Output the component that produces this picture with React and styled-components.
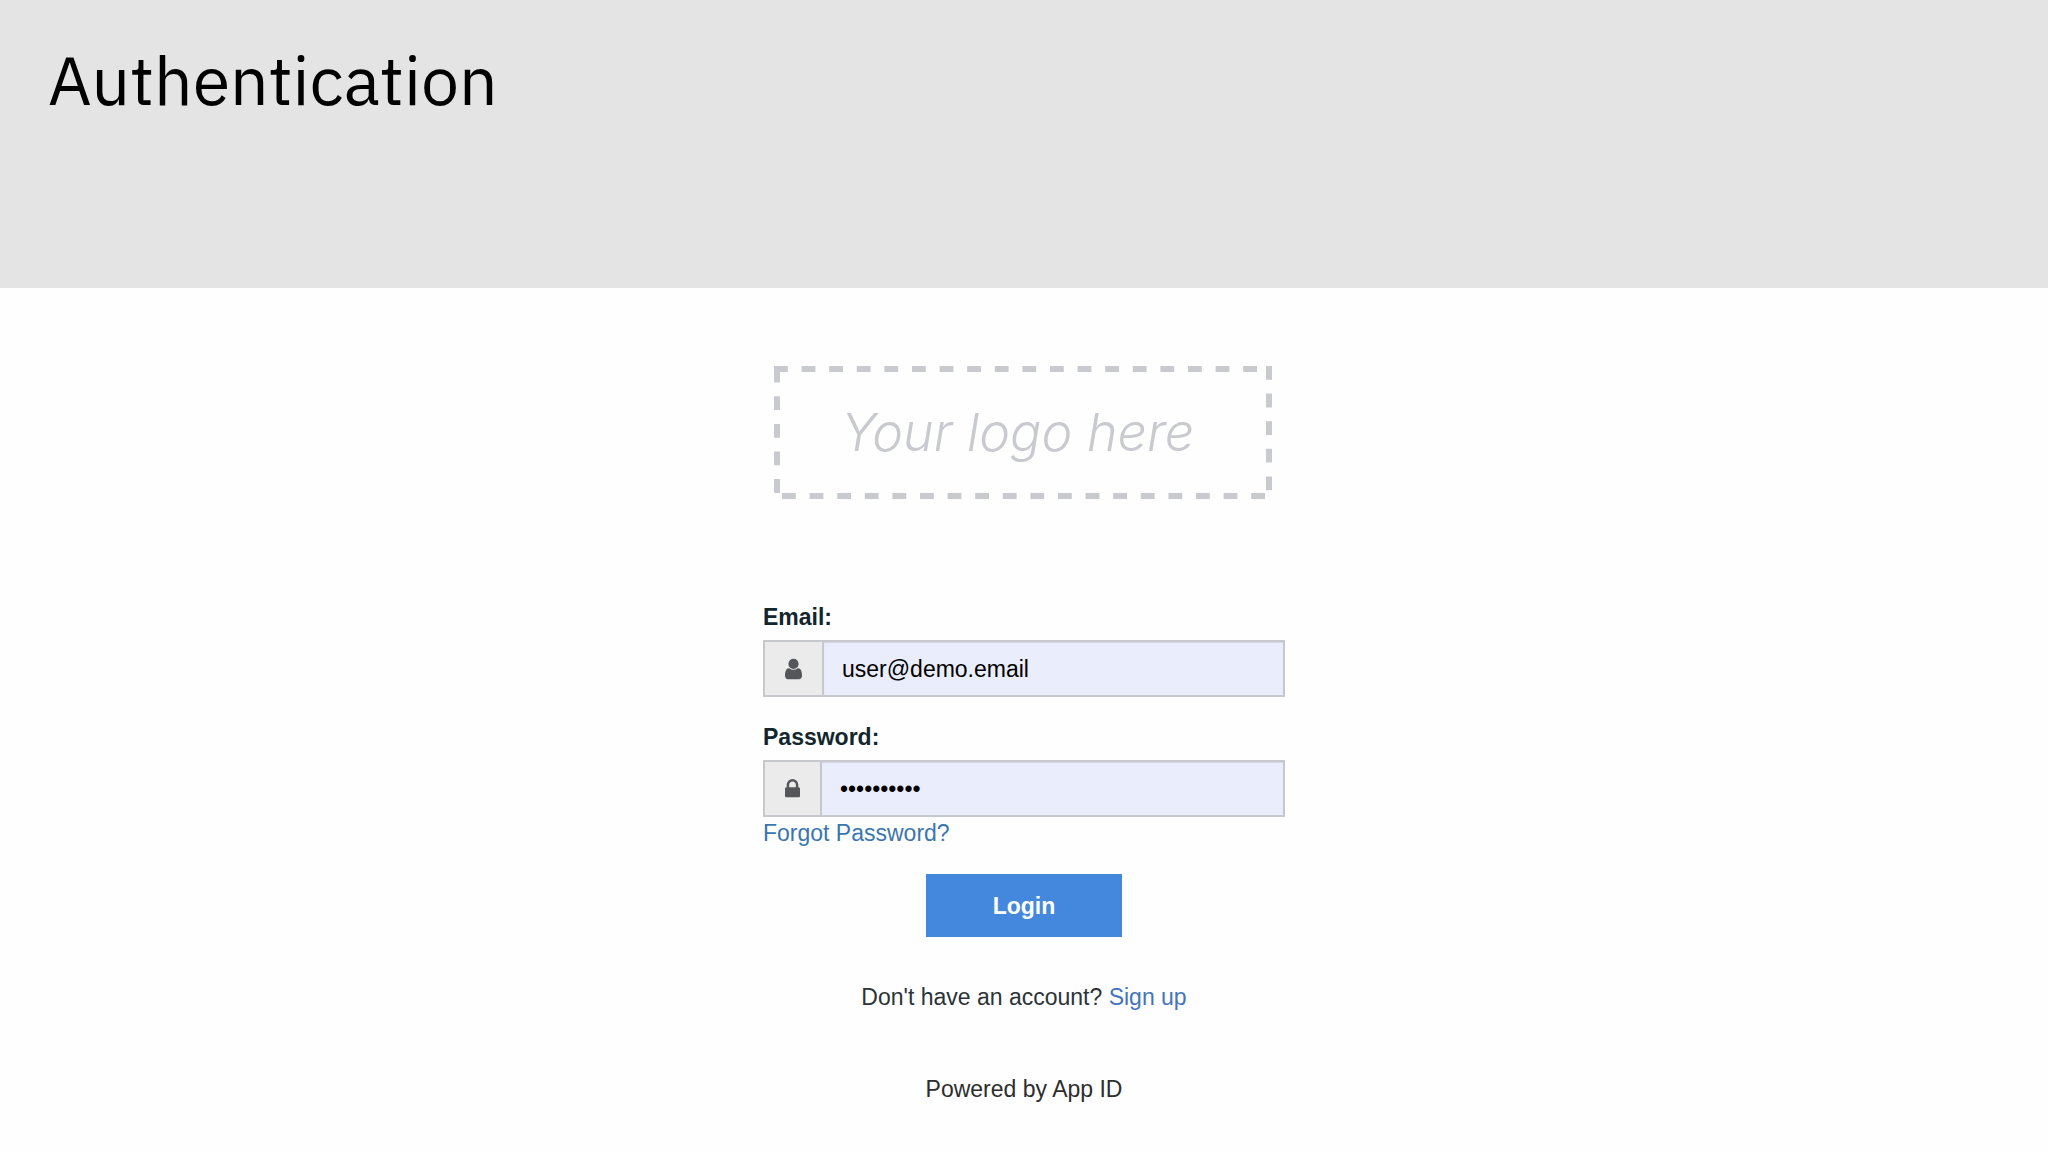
import React from 'react'
import styled, { createGlobalStyle } from 'styled-components'

const userPathD =
  'M1536 1399q0 109-62.5 187t-150.5 78h-854q-88 0-150.5-78t-62.5-187q0-85 8.5-160.5t31.5-152 58.5-131 94-89 134.5-34.5q131 128 313 128t313-128q76 0 134.5 34.5t94 89 58.5 131 31.5 152 8.5 160.5zm-256-887q0 159-112.5 271.5t-271.5 112.5-271.5-112.5-112.5-271.5 112.5-271.5 271.5-112.5 271.5 112.5 112.5 271.5z'
const lockPathD =
  'M640 768h512v-192q0-106-75-181t-181-75-181 75-75 181v192zm832 96v576q0 40-28 68t-68 28h-960q-40 0-68-28t-28-68v-576q0-40 28-68t68-28h32v-192q0-184 132-316t316-132 316 132 132 316v192h32q40 0 68 28t28 68z'

const GlobalStyle = createGlobalStyle`
  * {
    box-sizing: border-box;
  }
  body {
    margin: 0;
    background: #fefefe;
    color: #12262e;
    font-family: 'Liberation Sans', Arial, sans-serif;
    font-size: 23px;
    line-height: 32px;
  }
`

const Header = styled.header`
  background: #e4e4e4;
  min-height: 288px;
  padding: 35px 48px;
  h1 {
    margin: 0;
    color: #000;
    font-family: 'IBM Plex Sans', Roboto, sans-serif;
    font-size: 68px;
    font-weight: 400;
    line-height: 90px;
  }
`

const Main = styled.main`
  display: flex;
  flex-direction: column;
  align-items: center;
  padding: 78px 24px 40px;
`

const Logo = styled.div`
  display: grid;
  width: 100%;
  max-width: 500px;
  padding-right: 2px;
  color: #c8cacf;
  > * {
    grid-area: 1 / 1;
  }
  svg {
    display: block;
    width: 100%;
    fill: none;
    stroke: currentColor;
    stroke-width: 6;
    stroke-dasharray: 13.8 13.8;
  }
  span {
    place-self: center;
    padding-right: 10px;
    font-family: Inter, sans-serif;
    font-size: 52px;
    font-style: italic;
    font-weight: 300;
    line-height: 64px;
  }
`

const Form = styled.form`
  display: flex;
  flex-direction: column;
  width: 100%;
  max-width: 522px;
  margin-top: 102px;
`

const Field = styled.div`
  margin-bottom: ${props => (props.$last ? '0' : '24px')};
  label {
    display: block;
    margin-bottom: 7px;
    font-weight: bold;
  }
`

const InputGroup = styled.div`
  display: flex;
  height: 57px;
  border: 2px solid #c6c8ce;
  background: #e9edfc;
`

const Addon = styled.span`
  display: flex;
  align-items: center;
  justify-content: center;
  padding: 0 20px;
  border-right: 2px solid #c6c8ce;
  background: #ebebec;
  svg {
    width: ${props => props.$iconWidth}px;
    height: 24px;
    fill: #55565a;
  }
`

const Input = styled.input`
  flex: 1;
  min-width: 0;
  padding: 0 18px;
  border: 0;
  outline: 0;
  background: transparent;
  box-shadow: inset 0 1px 1px rgba(0, 0, 0, 0.1);
  color: #000;
  font: inherit;
`

const Link = styled.a`
  color: ${props => props.$color || '#3a76b0'};
  text-decoration: none;
`

const LoginButton = styled.button`
  align-self: center;
  width: 196px;
  height: 63px;
  margin-top: 25px;
  border: 0;
  background: #4488dd;
  color: #fff;
  font: inherit;
  font-weight: bold;
  cursor: pointer;
`

const Text = styled.p`
  margin: ${props => props.$top} 0 0;
  color: ${props => props.$color};
`

const LogoPlaceholder = () => (
  <Logo>
    <svg viewBox="0 0 498 133" aria-hidden="true">
      <path d="M0 3H498" />
      <path d="M3 0V133" strokeDasharray="16.5 13.8 13.8 13.8 13.8 13.8 13.8 13.8 13.8 13.8" />
      <path d="M8 130H492" />
      <path d="M495 0V126" />
    </svg>
    <span>Your logo here</span>
  </Logo>
)

const LoginField = ({ id, label, icon, viewBox, iconWidth, last, ...rest }) => (
  <Field $last={last}>
    <label htmlFor={id}>{label}</label>
    <InputGroup>
      <Addon $iconWidth={iconWidth}>
        <svg viewBox={viewBox} aria-hidden="true">
          <path d={icon} />
        </svg>
      </Addon>
      <Input id={id} {...rest} />
    </InputGroup>
  </Field>
)

const App = () => {
  return (
    <>
      <GlobalStyle />
      <Header>
        <h1>Authentication</h1>
      </Header>
      <Main>
        <LogoPlaceholder />
        <Form onSubmit={e => e.preventDefault()}>
          <LoginField
            id="email"
            label="Email:"
            icon={userPathD}
            viewBox="256 0 1280 1792"
            iconWidth={17}
            type="email"
            defaultValue="user@demo.email"
          />
          <LoginField
            id="password"
            label="Password:"
            icon={lockPathD}
            viewBox="320 0 1152 1792"
            iconWidth={15}
            type="password"
            defaultValue="demouser12"
            last
          />
          <div>
            <Link href="#forgot">Forgot Password?</Link>
          </div>
          <LoginButton type="submit">Login</LoginButton>
        </Form>
        <Text $top="44px" $color="#2b3338">
          Don't have an account? <Link href="#signup" $color="#4474bd">Sign up</Link>
        </Text>
        <Text $top="60px" $color="#2d2d2d">Powered by App ID</Text>
      </Main>
    </>
  )
}

export default App
